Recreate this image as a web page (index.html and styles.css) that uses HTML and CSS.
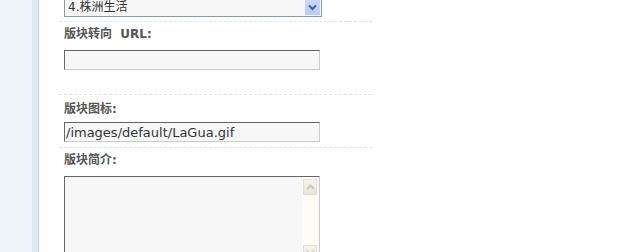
FILE: index.html
```html
<!DOCTYPE html>
<html lang="zh">
<head>
<meta charset="utf-8">
<title>版块设置</title>
<link rel="stylesheet" href="styles.css">
</head>
<body>
<div class="page">
  <div class="side"></div>
  <div class="side-edge"></div>
  <div class="main">
    <div class="form">
      <div class="row row-select">
        <div class="select">
          <span class="select-text">4.株洲生活</span>
          <span class="select-btn">
            <svg width="9" height="7" viewBox="0 0 9 7"><path d="M1 1.5 L4.5 5 L8 1.5" fill="none" stroke="#4d6185" stroke-width="2"/></svg>
          </span>
        </div>
      </div>
      <div class="row row-a">
        <div class="label">版块转向&nbsp;&nbsp;URL:</div>
        <div class="input"></div>
      </div>
      <div class="row row-b">
        <div class="label">版块图标:</div>
        <div class="input">/images/default/LaGua.gif</div>
      </div>
      <div class="row row-c">
        <div class="label">版块简介:</div>
        <div class="textarea">
          <div class="ta-body"></div>
          <div class="scroll">
            <div class="sb-btn">
              <svg width="9" height="6" viewBox="0 0 9 6"><path d="M1 5 L4.5 1.5 L8 5" fill="none" stroke="#c8c8c0" stroke-width="2"/></svg>
            </div>
            <div class="sb-track"></div>
            <div class="sb-btn">
              <svg width="9" height="6" viewBox="0 0 9 6"><path d="M1 1 L4.5 4.5 L8 1" fill="none" stroke="#c8c8c0" stroke-width="2"/></svg>
            </div>
          </div>
        </div>
      </div>
    </div>
  </div>
</div>
</body>
</html>
```

FILE: styles.css
```css
html, body {
  margin: 0;
  padding: 0;
  background: #ffffff;
  height: 100%;
  overflow: hidden;
}
.page {
  display: flex;
  min-height: 100%;
  font-family: "DejaVu Sans", Verdana, "Noto Sans CJK SC", sans-serif;
  font-size: 12px;
  color: #333;
}
.side {
  width: 32px;
  background: #eef6fb;
}
.side-edge {
  width: 6px;
  background: #dcebf6;
  border-right: 1px solid #b7d0e3;
}
.main {
  padding-left: 20px;
}
.form {
  width: 313px;
  margin-top: -4px;
}
.row {
  padding-left: 5px;
  border-bottom: 1px dashed #d8e7f3;
}
.row-select {
  padding-bottom: 4px;
}
.row-a {
  padding-top: 4px;
  padding-bottom: 24px;
}
.row-b {
  padding-top: 6px;
  padding-bottom: 5px;
}
.row-c {
  padding-top: 4px;
  border-bottom: none;
}
.label {
  font-weight: bold;
  color: #555;
  line-height: 16px;
  height: 16px;
  margin-bottom: 8px;
}
.row-b .label {
  margin-bottom: 5px;
}
.select {
  width: 254px;
  height: 17px;
  border: 1px solid #7f9db9;
  background: #f7f7f7;
  display: flex;
  align-items: stretch;
  padding: 1px;
}
.select-text {
  flex: 1;
  line-height: 19px;
  padding-left: 2px;
  color: #333;
}
.select-btn {
  width: 15px;
  background: linear-gradient(#c9dafd, #b5ccf9);
  display: flex;
  align-items: center;
  justify-content: center;
  padding-top: 2px;
}
.input {
  width: 253px;
  height: 18px;
  line-height: 19px;
  border-top: 1px solid #666;
  border-left: 1px solid #666;
  border-right: 1px solid #ccc;
  border-bottom: 1px solid #ccc;
  background: #f7f7f7;
  padding-left: 1px;
  color: #333;
  font-size: 13px;
  white-space: nowrap;
}
.textarea {
  width: 253px;
  height: 100px;
  border-top: 1px solid #666;
  border-left: 1px solid #666;
  border-right: 1px solid #ccc;
  border-bottom: 1px solid #ccc;
  background: #f7f7f7;
  display: flex;
  padding-right: 1px;
}
.ta-body {
  flex: 1;
}
.scroll {
  width: 16px;
  background: #fdfdf5;
  display: flex;
  flex-direction: column;
  padding-top: 2px;
}
.sb-btn {
  height: 14px;
  margin: 0 1px;
  background: linear-gradient(#f4f4ec, #e6e6dc);
  border: 1px solid #e0e0d8;
  display: flex;
  align-items: center;
  justify-content: center;
}
.sb-track {
  height: 50px;
}
```
